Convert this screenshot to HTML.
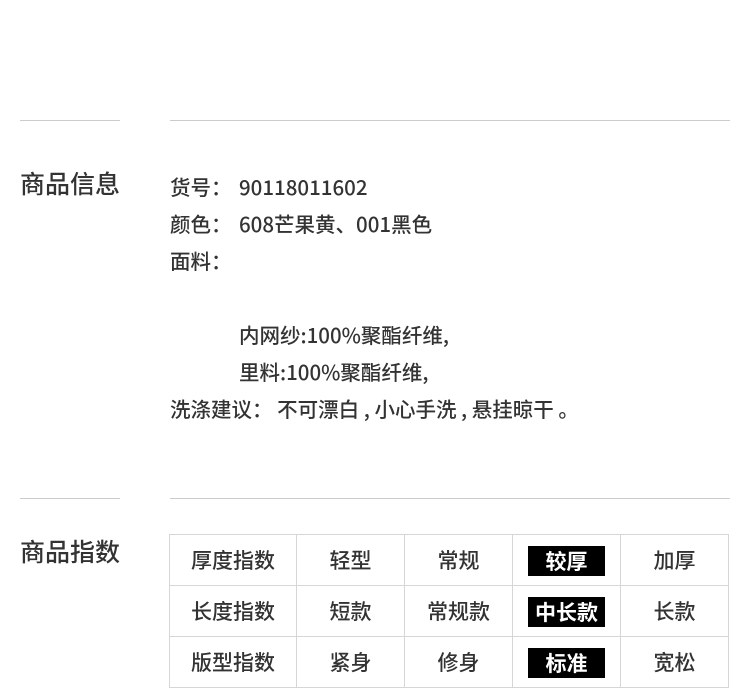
<!DOCTYPE html>
<html><head><meta charset="utf-8"><style>
body{margin:0;width:750px;height:688px;background:#fff;position:relative;overflow:hidden;font-family:"Noto Sans CJK SC","Liberation Sans",sans-serif;color:#333;font-weight:500}
.hr{position:absolute;height:1px;background:#ccc}
.h{position:absolute;left:20px;font-size:25px;line-height:30px;color:#333}
.l{position:absolute;font-size:20.5px;line-height:24px;white-space:nowrap}
.v{position:absolute;left:69px}
table{position:absolute;left:169px;top:534px;border-collapse:collapse;font-size:21px}
td{border:1px solid #d6d6d6;height:50px;padding:0;text-align:center;width:107px;vertical-align:middle;line-height:30px}
td.f{width:126px}
.b{display:inline-block;vertical-align:middle;background:#000;color:#fff;width:77px;height:30px;line-height:30px;font-weight:bold}
</style></head><body>
<div class="hr" style="left:20px;width:100px;top:120px"></div>
<div class="hr" style="left:170px;width:560px;top:120px"></div>
<div class="h" style="top:168px">商品信息</div>
<div class="l" style="left:170px;top:174px">货号：<span class="v">90118011602</span></div>
<div class="l" style="left:170px;top:211px">颜色：<span class="v">608芒果黄、001黑色</span></div>
<div class="l" style="left:170px;top:248px">面料：</div>
<div class="l" style="left:239px;top:322px">内网纱:100%聚酯纤维,</div>
<div class="l" style="left:239px;top:359px">里料:100%聚酯纤维,</div>
<div class="l" style="left:170px;top:396px">洗涤建议：&nbsp;不可漂白 , 小心手洗 , 悬挂晾干 。</div>
<div class="hr" style="left:20px;width:100px;top:498px"></div>
<div class="hr" style="left:170px;width:560px;top:498px"></div>
<div class="h" style="top:536px">商品指数</div>
<table>
<tr><td class="f">厚度指数</td><td>轻型</td><td>常规</td><td><span class="b">较厚</span></td><td>加厚</td></tr>
<tr><td class="f">长度指数</td><td>短款</td><td>常规款</td><td><span class="b">中长款</span></td><td>长款</td></tr>
<tr><td class="f">版型指数</td><td>紧身</td><td>修身</td><td><span class="b">标准</span></td><td>宽松</td></tr>
</table>
</body></html>
